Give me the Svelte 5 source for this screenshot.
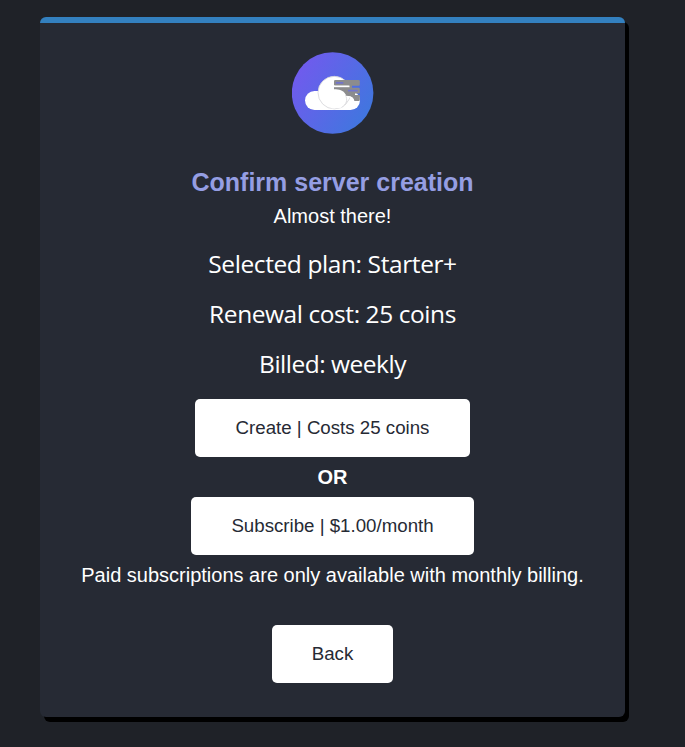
<script>
  const details = [
    { text: 'Selected plan: Starter+', spacing: -0.4 },
    { text: 'Renewal cost: 25 coins', spacing: -0.43 },
    { text: 'Billed: weekly', spacing: -0.49 }
  ];
</script>

<main>
  <section class="card">
    <svg class="logo" viewBox="0 0 82 82" aria-hidden="true">
      <defs>
        <linearGradient id="disc" x1="0" y1="0.2" x2="1" y2="0.8">
          <stop offset="0" stop-color="#7359ee" />
          <stop offset="1" stop-color="#3d78de" />
        </linearGradient>
      </defs>
      <circle cx="40.6" cy="41" r="40.8" fill="url(#disc)" />
      <rect x="13" y="39" width="55" height="19" rx="9.5" fill="#fff" />
      <circle cx="42.3" cy="40.6" r="16.3" fill="#fff" stroke="#d4d4d8" stroke-width="0.8" />
      <rect x="42" y="28" width="25.8" height="5.8" rx="1.3" fill="#8c8c8e" />
      <path d="M57 33h3v3h-3z" fill="#8c8c8e" />
      <rect x="42" y="35" width="17" height="5" fill="#8c8c8e" />
      <rect x="50" y="35.800" width="17.8" height="5.800" rx="1.3" fill="#8c8c8e" />
      <path d="M52 41h11v2h4.800v5q0 1-1 1h-4.500q-1-5-6.500-5h-3z" fill="#8c8c8e" />
      <rect x="43.8" y="30" width="7.6" height="1.7" rx=".5" fill="#7173cc" />
      <rect x="56" y="37.800" width="9.8" height="1.6" rx=".5" fill="#7276cc" />
      <path d="M42 34.400h15.500" stroke="#fff" stroke-width="1.6" />
      <path d="M42 37.200c5 0 9.500 1 11.500 5 2.500 5 1 10-4 13.500L40 56.500l-6-5V40z" fill="#fff" />
      <path d="M53.500 43c2.500 5 1 9.500-4 12.500" fill="none" stroke="#d4d4d8" stroke-width=".8" />
      <path d="M54.500 44.500c4 0 7 2 7 6" fill="none" stroke="#fff" stroke-width="1.500" />
    </svg>
    <h1>Confirm server creation</h1>
    <p class="lead">Almost there!</p>
    <div class="details">
      {#each details as d}
        <p style="letter-spacing: {d.spacing}px">{d.text}</p>
      {/each}
    </div>
    <button class="create">Create | Costs 25 coins</button>
    <strong>OR</strong>
    <button class="subscribe">Subscribe | $1.00/month</button>
    <p class="note">Paid subscriptions are only available with monthly billing.</p>
    <button class="back">Back</button>
  </section>
</main>

<style>
  :global(body) { margin: 0; background: #1f2228; overflow: hidden; }
  main {
    box-sizing: border-box;
    height: 747px;
    padding: 17px 60px 30px 40px;
    background: #1f2228;
    font-family: "Liberation Sans", Arial, sans-serif;
    color: #fff;
  }
  .card {
    box-sizing: border-box;
    height: 700px;
    padding-top: 29px;
    display: flex;
    flex-direction: column;
    align-items: center;
    background: #262a34;
    border-top: 6px solid #3380bf;
    border-radius: 6px;
    box-shadow: 4px 5px 0 #000;
  }
  .logo { width: 82px; height: 82px; flex: none; }
  h1, p { margin: 0; white-space: nowrap; }
  h1 { margin-top: 33px; font-size: 25px; line-height: 30px; color: #959ee3; }
  .lead, .note, strong { font-size: 20px; line-height: 40px; }
  .lead { margin-top: -1px; }
  .details {
    margin: 3px 0 10px;
    text-align: center;
    font-family: "Open Sans", "Noto Sans", sans-serif;
    font-size: 24.5px;
    line-height: 50px;
  }
  button {
    flex: none;
    height: 58px;
    padding: 0;
    border: 0;
    border-radius: 5px;
    background: #fff;
    color: #262a34;
    font: 18.7px "Liberation Sans", Arial, sans-serif;
  }
  .create { width: 275px; }
  .subscribe { width: 283px; }
  .back { width: 121px; margin-top: 30px; }
</style>
